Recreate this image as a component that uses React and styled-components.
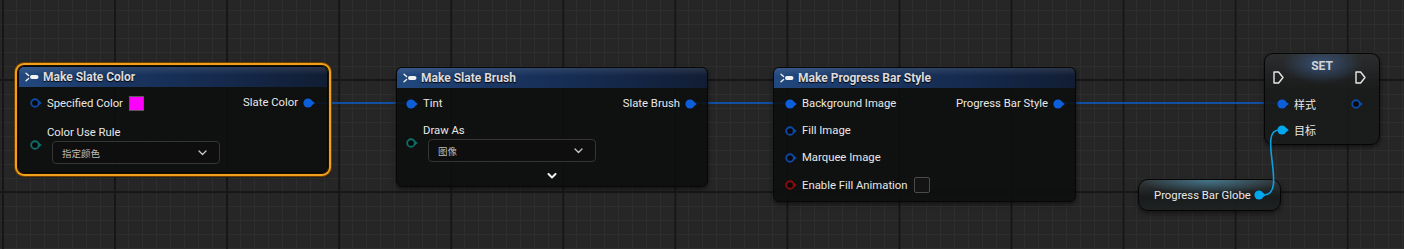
import React from 'react';
import styled, { createGlobalStyle, css } from 'styled-components';

const GlobalStyle = createGlobalStyle`
  html, body {
    margin: 0;
    padding: 0;
    background: #262626;
  }
  body {
    font-family: Roboto, "Noto Sans", "Noto Sans CJK SC", sans-serif;
  }
`;

const Canvas = styled.div`
  position: relative;
  width: 1404px;
  height: 249px;
  overflow: hidden;
  background-color: #262626;
  background-image:
    linear-gradient(to right, #161616 2px, transparent 2px),
    linear-gradient(to bottom, #161616 2px, transparent 2px),
    linear-gradient(to right, #2e2e2e 1px, transparent 1px),
    linear-gradient(to bottom, #2e2e2e 1px, transparent 1px);
  background-size: 112.06px 112.06px, 112.06px 112.06px, 14.007px 14.007px, 14.007px 14.007px;
  background-position: 2px 79px, 2px 79px, 2px 10px, 2px 10px;
`;

const Wires = styled.svg`
  position: absolute;
  left: 0;
  top: 0;
  pointer-events: none;
  z-index: ${p => p.$z || 0};
`;

const Node = styled.div`
  position: absolute;
  z-index: 1;
  left: ${p => p.$x}px;
  top: ${p => p.$y}px;
  width: ${p => p.$w}px;
  height: ${p => p.$h}px;
  box-sizing: border-box;
  border: 1px solid #070707;
  border-radius: 6px;
  background: rgba(13, 14, 14, 0.88);
  box-shadow: 0 2px 5px rgba(0, 0, 0, 0.55);
  color: #e8e8e8;
  font-size: 11.3px;
  ${p => p.$selected && css`
    box-shadow: 0 0 0 1px #1a1000, 0 0 0 3px #f0a01a, 0 0 0 4px #6a3e00, 0 2px 6px rgba(0, 0, 0, 0.6);
  `}
`;

const Header = styled.div`
  display: flex;
  align-items: center;
  gap: 4px;
  height: 20px;
  padding-left: 6px;
  border-radius: 5px 5px 0 0;
  background:
    linear-gradient(to bottom, rgba(255, 255, 255, 0.1), rgba(255, 255, 255, 0) 40%),
    linear-gradient(90deg, #22497f 0%, #1a3663 30%, #14284a 70%, #111d33 100%);
  font-size: 12px;
  font-weight: 700;
  color: #dcdcdc;
  text-shadow: 0 1px 1px #000;
`;

const Body = styled.div`
  display: flex;
  justify-content: space-between;
  padding: ${p => p.$pad || '2px 10px 0 10px'};
`;

const Column = styled.div`
  display: flex;
  flex-direction: column;
  align-items: ${p => (p.$right ? 'flex-end' : 'flex-start')};
`;

const PinRow = styled.div`
  display: flex;
  align-items: center;
  gap: 5px;
  height: ${p => p.$h || 27}px;
  white-space: nowrap;
`;

const PinSvg = styled.svg`
  flex: none;
  display: block;
`;

const Swatch = styled.div`
  width: 13px;
  height: 13px;
  margin-left: 1px;
  background: #ff00ff;
  border: 1px solid #5a5a5a;
`;

const CheckBox = styled.div`
  width: 14px;
  height: 14px;
  margin-left: 1px;
  border: 1px solid #4a4a4a;
  border-radius: 2px;
  background: #141414;
`;

const EnumBlock = styled.div`
  display: flex;
  align-items: center;
  gap: 5px;
  margin-top: ${p => p.$mt || 7}px;
`;

const EnumFields = styled.div`
  display: flex;
  flex-direction: column;
`;

const EnumLabel = styled.div`
  height: 14px;
  line-height: 14px;
`;

const Dropdown = styled.div`
  display: flex;
  align-items: center;
  justify-content: space-between;
  box-sizing: border-box;
  width: 168px;
  height: 23px;
  margin: 1px 0 0 5px;
  padding: 0 12px 0 9px;
  border: 1px solid #353535;
  border-radius: 4px;
  background: #0e0e0e;
  color: #bdbdbd;
  font-family: "Noto Sans CJK SC", sans-serif;
  font-size: 9.5px;
`;

const Footer = styled.div`
  display: flex;
  justify-content: center;
  margin-top: 11px;
`;

const SetNode = styled(Node)`
  border-radius: 9px;
  border-color: #050505;
  background:
    radial-gradient(ellipse 40px 20px at 50% 10px, rgba(70, 120, 190, 0.5), rgba(70, 120, 190, 0) 100%),
    linear-gradient(to bottom, rgba(44, 46, 47, 0.9), rgba(24, 25, 25, 0.88) 40%, rgba(24, 25, 25, 0.88));
  padding-top: 5px;
`;

const SetTitle = styled.div`
  text-align: center;
  height: 14px;
  line-height: 14px;
  font-size: 12px;
  font-weight: 700;
  color: #d4d4d4;
  margin-bottom: -2px;
`;

const ExecRow = styled.div`
  display: flex;
  justify-content: space-between;
  padding: 0 13px 0 8px;
  height: 12px;
  align-items: center;
  margin-bottom: 7px;
`;

const CjkLabel = styled.span`
  font-family: "Noto Sans CJK SC", sans-serif;
  font-size: 11px;
`;

const VarNode = styled(Node)`
  display: flex;
  align-items: center;
  justify-content: space-between;
  padding: 0 14px 0 15px;
  border-radius: 10px;
  border-color: #050505;
  background:
    radial-gradient(ellipse 70px 14px at 50% 0px, rgba(90, 180, 220, 0.5), rgba(90, 180, 220, 0) 100%),
    linear-gradient(to bottom, rgba(50, 56, 58, 0.95), rgba(24, 27, 28, 0.92) 55%, rgba(30, 33, 34, 0.92));
`;

const COLORS = {
  struct: '#0c5fd8',
  structDim: '#0b4aa8',
  enum: '#0d6e68',
  bool: '#8c0d0d',
  object: '#00a6ee',
};

const Pin = ({ color, filled }) => (
  <PinSvg width="12" height="10" viewBox="0 0 12 10">
    <path d="M8.6 2.4 L11.8 5 L8.6 7.6 Z" fill={color} />
    {filled ? (
      <circle cx="5" cy="5" r="4.6" fill={color} />
    ) : (
      <circle cx="5" cy="5" r="3.8" fill="#080808" stroke={color} strokeWidth="1.9" />
    )}
  </PinSvg>
);

const ExecPin = () => (
  <PinSvg width="11" height="13" viewBox="0 0 11 13">
    <path d="M1 1 H5.6 L10 6.5 L5.6 12 H1 Z" fill="none" stroke="#e8e8e8" strokeWidth="1.4" strokeLinejoin="round" />
  </PinSvg>
);

const FuncIcon = () => (
  <PinSvg width="14" height="10" viewBox="0 0 14 10">
    <path d="M1 1.2 L3.6 3.6 M1 8.8 L3.6 6.4" stroke="#f2f2f2" strokeWidth="1.3" strokeLinecap="round" />
    <rect x="5" y="3" width="8.5" height="4" rx="2" fill="#f2f2f2" />
  </PinSvg>
);

const Chevron = ({ color = '#c8c8c8', w = 9, bold }) => (
  <PinSvg width={w} height="6" viewBox="0 0 9 6">
    <path d="M1 1 L4.5 4.5 L8 1" fill="none" stroke={color} strokeWidth={bold ? 2 : 1.3} strokeLinecap="round" strokeLinejoin="round" />
  </PinSvg>
);

export default function App() {
  return (
    <>
      <GlobalStyle />
      <Canvas>
        <Wires width="1404" height="249">
          <g fill="none" strokeWidth="1.6">
            <path d="M308 103 L411 103" stroke="#0d5ccc" />
            <path d="M690 103 L790 103" stroke="#0d5ccc" />
            <path d="M1058 103 L1282 103" stroke="#0d5ccc" />
          </g>
        </Wires>

        <Node $x={18} $y={66} $w={310} $h={107} $selected>
          <Header>
            <FuncIcon />
            Make Slate Color
          </Header>
          <Body $pad="2px 12px 0 11px">
            <Column>
              <PinRow $h={28}>
                <Pin color={COLORS.structDim} />
                Specified Color
                <Swatch />
              </PinRow>
              <EnumBlock $mt={9}>
                <Pin color={COLORS.enum} />
                <EnumFields>
                  <EnumLabel>Color Use Rule</EnumLabel>
                  <Dropdown>
                    指定颜色
                    <Chevron />
                  </Dropdown>
                </EnumFields>
              </EnumBlock>
            </Column>
            <Column $right>
              <PinRow>
                Slate Color
                <Pin color={COLORS.struct} filled />
              </PinRow>
            </Column>
          </Body>
        </Node>

        <Node $x={396} $y={67} $w={312} $h={120}>
          <Header>
            <FuncIcon />
            Make Slate Brush
          </Header>
          <Body $pad="2px 10px 0 9px">
            <Column>
              <PinRow>
                <Pin color={COLORS.struct} filled />
                Tint
              </PinRow>
              <EnumBlock $mt={7}>
                <Pin color={COLORS.enum} />
                <EnumFields>
                  <EnumLabel>Draw As</EnumLabel>
                  <Dropdown>
                    图像
                    <Chevron />
                  </Dropdown>
                </EnumFields>
              </EnumBlock>
            </Column>
            <Column $right>
              <PinRow>
                Slate Brush
                <Pin color={COLORS.struct} filled />
              </PinRow>
            </Column>
          </Body>
          <Footer>
            <Chevron color="#f0f0f0" w={10} bold />
          </Footer>
        </Node>

        <Node $x={773} $y={67} $w={303} $h={135}>
          <Header>
            <FuncIcon />
            Make Progress Bar Style
          </Header>
          <Body $pad="2px 10px 0 11px">
            <Column>
              <PinRow>
                <Pin color={COLORS.struct} filled />
                Background Image
              </PinRow>
              <PinRow>
                <Pin color={COLORS.structDim} />
                Fill Image
              </PinRow>
              <PinRow>
                <Pin color={COLORS.structDim} />
                Marquee Image
              </PinRow>
              <PinRow $h={28}>
                <Pin color={COLORS.bool} />
                Enable Fill Animation
                <CheckBox />
              </PinRow>
            </Column>
            <Column $right>
              <PinRow>
                Progress Bar Style
                <Pin color={COLORS.struct} filled />
              </PinRow>
            </Column>
          </Body>
        </Node>

        <SetNode $x={1264} $y={53} $w={116} $h={92}>
          <SetTitle>SET</SetTitle>
          <ExecRow>
            <ExecPin />
            <ExecPin />
          </ExecRow>
          <Body $pad="0 16px 0 12px">
            <Column>
              <PinRow>
                <Pin color={COLORS.struct} filled />
                <CjkLabel>样式</CjkLabel>
              </PinRow>
              <PinRow $h={26}>
                <Pin color={COLORS.object} filled />
                <CjkLabel>目标</CjkLabel>
              </PinRow>
            </Column>
            <Column $right>
              <PinRow>
                <Pin color={COLORS.structDim} />
              </PinRow>
            </Column>
          </Body>
        </SetNode>

        <VarNode $x={1138} $y={179} $w={143} $h={32}>
          Progress Bar Globe
          <Pin color={COLORS.object} filled />
        </VarNode>

        <Wires width="1404" height="249" $z={2}>
          <path d="M1264 195 C1288 195, 1257 130, 1279 130" fill="none" strokeWidth="1.6" stroke="#0aa0e2" />
        </Wires>
      </Canvas>
    </>
  );
}
